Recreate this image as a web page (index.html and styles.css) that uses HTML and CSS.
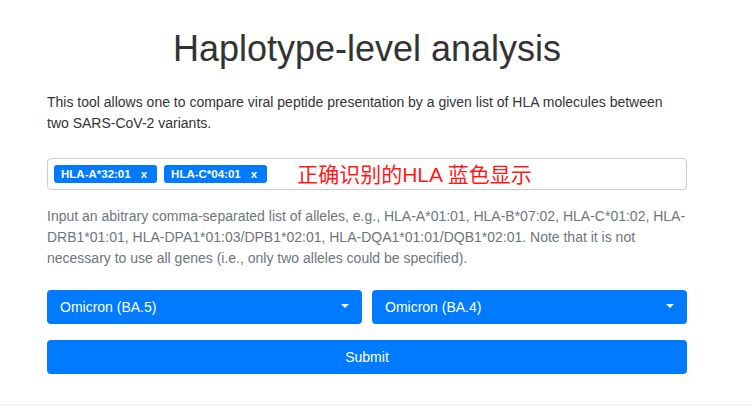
FILE: index.html
```html
<!DOCTYPE html>
<html lang="en">
<head>
<meta charset="utf-8">
<title>Haplotype-level analysis</title>
<link rel="stylesheet" href="styles.css">
</head>
<body>
<main class="page">
  <h1 class="title">Haplotype-level analysis</h1>
  <p class="intro">This tool allows one to compare viral peptide presentation by a given list of HLA molecules between two SARS-CoV-2 variants.</p>
  <div class="tag-input">
    <span class="tag">HLA-A*32:01<span class="tag-x">x</span></span>
    <span class="tag">HLA-C*04:01<span class="tag-x">x</span></span>
    <span class="note">正确识别的HLA 蓝色显示</span>
  </div>
  <p class="help">Input an abitrary comma-separated list of alleles, e.g., HLA-A*01:01, HLA-B*07:02, HLA-C*01:02, HLA-DRB1*01:01, HLA-DPA1*01:03/DPB1*02:01, HLA-DQA1*01:01/DQB1*02:01. Note that it is not necessary to use all genes (i.e., only two alleles could be specified).</p>
  <div class="selects">
    <div class="select">Omicron (BA.5)<span class="caret"></span></div>
    <div class="select">Omicron (BA.4)<span class="caret"></span></div>
  </div>
  <button class="submit" type="button">Submit</button>
</main>
<footer class="footer"></footer>
</body>
</html>
```
FILE: styles.css
```css
* { box-sizing: border-box; }
html, body { margin: 0; padding: 0; }
body {
  font-family: "Liberation Sans", Arial, sans-serif;
  font-size: 14px;
  line-height: 1.5;
  color: #333;
  background: #fff;
  width: 752px;
  height: 411px;
  overflow: hidden;
}
.page {
  width: 640px;
  margin-left: 47px;
  display: flex;
  flex-direction: column;
}
.title {
  margin: 27px 0 22px;
  font-size: 36px;
  font-weight: 400;
  line-height: 1.2;
  text-align: center;
  color: #333;
}
.intro {
  margin: 0 0 24px;
}
.tag-input {
  height: 32px;
  border: 1px solid #ccc;
  border-radius: 4px;
  display: flex;
  align-items: center;
  padding: 0 6px;
  gap: 7px;
}
.tag {
  background: #007bff;
  color: #fff;
  font-weight: 700;
  font-size: 11.5px;
  line-height: 18px;
  height: 18px;
  border-radius: 3px;
  padding: 0 10px 0 7px;
  display: inline-flex;
  align-items: center;
}
.tag-x {
  margin-left: 10px;
}
.note {
  margin-left: 23px;
  color: #ff1a1a;
  font-size: 21px;
  line-height: 1;
  font-family: "Liberation Sans", "Noto Sans CJK SC", sans-serif;
}
.help {
  margin: 16px 0 21px;
  color: #6c757d;
}
.selects {
  display: flex;
  gap: 10px;
}
.select {
  flex: 1;
  height: 34px;
  background: #007bff;
  color: #fff;
  border-radius: 4px;
  display: flex;
  align-items: center;
  justify-content: space-between;
  padding: 0 13px 0 13px;
}
.caret {
  width: 0;
  height: 0;
  border-left: 4px solid transparent;
  border-right: 4px solid transparent;
  border-top: 4px solid #fff;
  margin-top: -2px;
}
.submit {
  margin-top: 16px;
  height: 34px;
  border: none;
  border-radius: 4px;
  background: #007bff;
  color: #fff;
  font-family: inherit;
  font-size: 14px;
  padding: 0;
}
.footer {
  margin-top: 30px;
  border-top: 1px solid #eee;
}
```
